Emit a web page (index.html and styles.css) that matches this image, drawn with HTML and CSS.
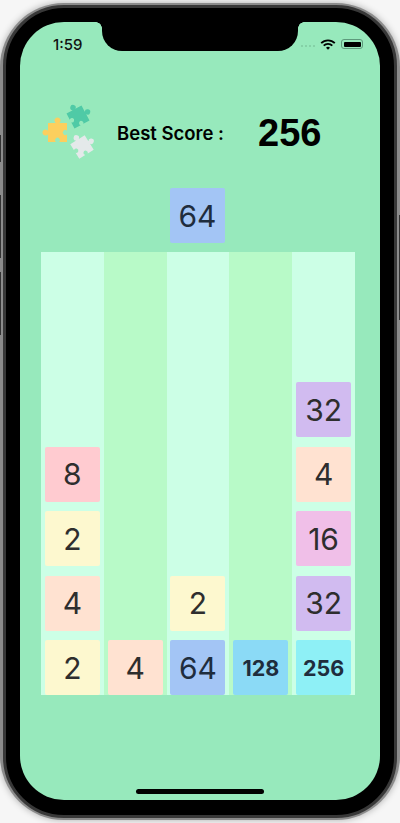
FILE: index.html
```html
<!DOCTYPE html>
<html lang="en">
<head>
<meta charset="utf-8">
<title>Puzzle 2048</title>
<link rel="stylesheet" href="styles.css">
</head>
<body>
<div class="phone">
  <span class="side-btn btn-a"></span>
  <span class="side-btn btn-b"></span>
  <span class="side-btn btn-c"></span>
  <span class="side-btn btn-d"></span>
  <div class="bezel">
    <main class="screen">
      <div class="notch"></div>
      <header class="status">
        <span class="time">1:59</span>
        <div class="status-icons">
          <span class="dots"><i></i><i></i><i></i><i></i></span>
          <svg class="wifi" width="16" height="11" viewBox="0 0 16 11"><path d="M1.200 4.200a9.500 9.500 0 0 1 13.600 0" fill="none" stroke="#000" stroke-width="1.800"/><path d="M3.700 6.700a6 6 0 0 1 8.600 0" fill="none" stroke="#000" stroke-width="1.800"/><path d="M6 8.700a2.900 2.900 0 0 1 4 0L8 10.800z" fill="#000"/></svg>
          <span class="battery"><span class="battery-fill"></span></span>
        </div>
      </header>
      <section class="score-row">
        <svg class="logo" width="60" height="64" viewBox="40 101 60 64">
          <defs>
            <path id="piece" d="M-10-10H-1.800A3.200 3.200 0 1 1 1.800-10H10V-1.800A2.600 2.600 0 1 0 10 1.800V10H1.800A2.600 2.600 0 1 0-1.800 10H-10V1.800A3.200 3.200 0 1 1-10-1.800Z"/>
          </defs>
          <use href="#piece" transform="translate(57.500 132.500) scale(.95)" fill="#fccf5e"/>
          <use href="#piece" transform="translate(78 117) rotate(-28) scale(-.85 .85)" fill="#4fcaa6"/>
          <use href="#piece" transform="translate(82 147) rotate(-32) scale(-.85 .85)" fill="#e4e9ea"/>
        </svg>
        <span class="best">Best Score :</span>
        <span class="score">256</span>
      </section>
      <div class="next-row"><div class="tile t64">64</div></div>
      <section class="board">
        <div class="col"><div class="tile t2">2</div><div class="tile t4">4</div><div class="tile t2">2</div><div class="tile t8">8</div></div>
        <div class="col"><div class="tile t4">4</div></div>
        <div class="col"><div class="tile t64">64</div><div class="tile t2">2</div></div>
        <div class="col"><div class="tile t128 small">128</div></div>
        <div class="col"><div class="tile t256 small">256</div><div class="tile t32">32</div><div class="tile t16">16</div><div class="tile t4">4</div><div class="tile t32">32</div></div>
      </section>
      <div class="home-bar"></div>
    </main>
  </div>
</div>
</body>
</html>
```
FILE: styles.css
```css
* { box-sizing: border-box; }
html, body { margin: 0; padding: 0; }
body { width: 400px; height: 823px; overflow: hidden; background: #f6f6f6; font-family: Inter, "Liberation Sans", sans-serif; }
.phone { position: relative; width: 400px; height: 817px; margin-top: 3px; padding: 2px 3px; border-radius: 64px; background: #8c8c8c; box-shadow: 0 0 7px rgba(0,0,0,.3); }
.side-btn { position: absolute; width: 1px; background: #333; }
.btn-a { left: 0; top: 132px; height: 27px; }
.btn-b { left: 0; top: 192px; height: 63px; }
.btn-c { left: 0; top: 269px; height: 63px; }
.btn-d { right: 0; top: 212px; height: 105px; }
.bezel { height: 813px; padding: 14px 14px 15px; border: 3px solid #383838; border-radius: 61px; background: #000; }
.screen { position: relative; height: 778px; display: flex; flex-direction: column; border-radius: 44px; background: #97e9bc; overflow: hidden; }
.notch { position: absolute; top: 0; left: 82px; width: 196px; height: 29px; background: #000; border-radius: 0 0 20px 20px; }
.notch::before, .notch::after { content: ""; position: absolute; top: 0; width: 6px; height: 6px; }
.notch::before { left: -6px; background: radial-gradient(circle at 0 100%, transparent 5.500px, #000 6px); }
.notch::after { right: -6px; background: radial-gradient(circle at 100% 100%, transparent 5.500px, #000 6px); }
.status { height: 24px; margin-top: 10px; padding: 0 17px 0 33px; display: flex; justify-content: space-between; align-items: center; }
.time { font-size: 15px; font-weight: 500; color: #111; }
.status-icons { display: flex; align-items: center; gap: 5px; }
.dots { display: flex; gap: 1.500px; margin-top: 4px; }
.dots i { width: 2.500px; height: 2.500px; border-radius: 50%; background: #7fc9a0; }
.battery { width: 22px; height: 10px; padding: 1.500px; border: 1px solid #5e9a7c; border-radius: 3px; }
.battery-fill { display: block; width: 100%; height: 100%; background: #000; border-radius: 1px; }
.score-row { height: 84px; margin-top: 35px; display: flex; align-items: center; }
.logo { margin-left: 20px; flex: none; }
.best { margin-left: 17px; width: 141px; font-size: 18.500px; font-weight: 600; color: #000; white-space: nowrap; }
.score { font-size: 38px; font-weight: 700; color: #000; font-family: "Liberation Sans", sans-serif; }
.next-row { height: 64px; padding-left: 150px; margin-top: 13px; }
.board { width: 314px; height: 443px; margin-left: 21px; display: flex; }
.col { flex: 1; display: flex; flex-direction: column-reverse; gap: 9.500px; align-items: center; background: #ccffe6; }
.col:nth-child(even) { background: #b8fac8; }
.tile { width: 55px; height: 55px; flex: none; display: flex; align-items: center; justify-content: center; border-radius: 2px; font-size: 30px; color: #2e2e2e; }
.t2 { background: #fdf8cf; }
.t4 { background: #ffe2d1; }
.t8 { background: #ffcbd0; }
.t16 { background: #f0bfe8; }
.t32 { background: #d1bbf0; }
.t64 { background: #a3c5f5; color: #1f2d3d; }
.t128 { background: #8bdaf6; }
.t256 { background: #8ef0f6; }
.small { font-size: 21.500px; font-weight: 700; color: #1f2d3d; }
.home-bar { position: absolute; left: 116px; bottom: 6px; width: 128px; height: 5px; background: #000; border-radius: 3px; }
```
